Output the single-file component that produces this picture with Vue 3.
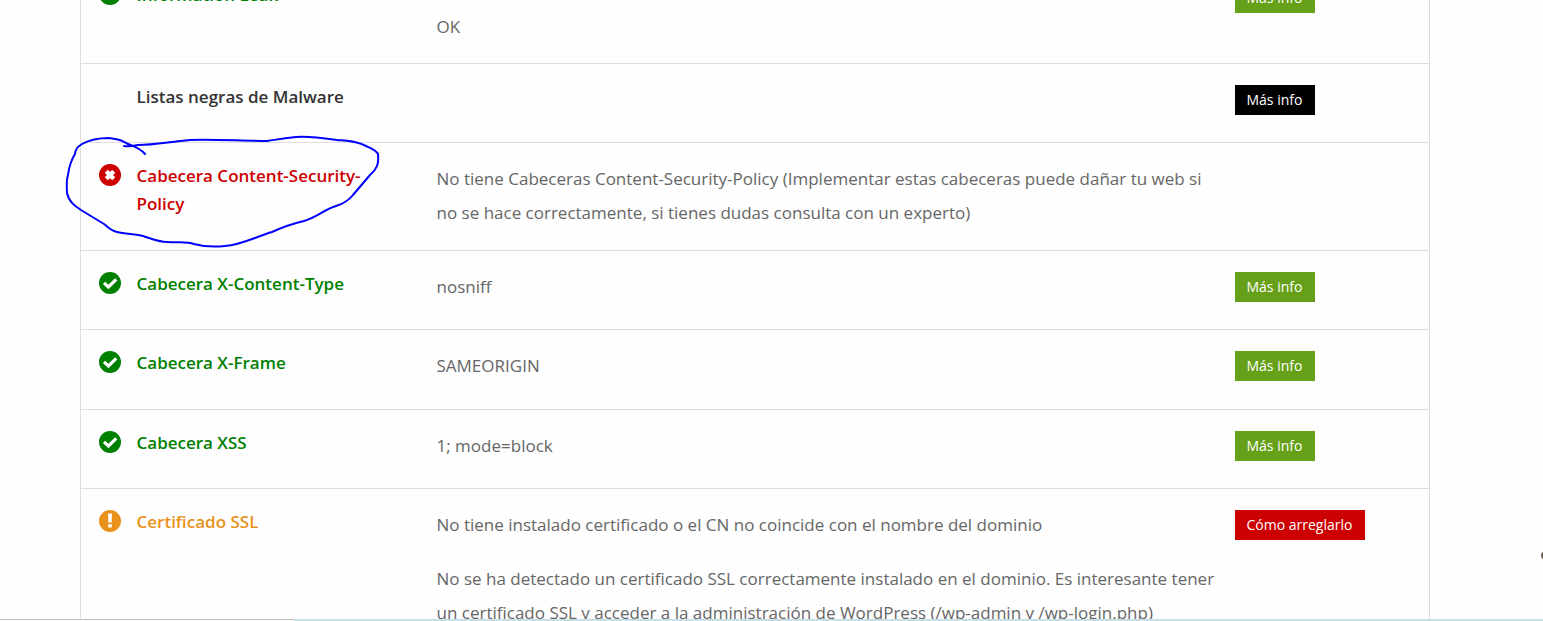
<script setup>
const rows = [
  { id: 'leak', status: 'ok', title: 'Information Leak', text: [['OK']], action: 'Más info', tone: 'green', spaced: true },
  { id: 'malware', status: 'none', title: 'Listas negras de Malware', text: [], action: 'Más info', tone: 'black' },
  {
    id: 'csp', status: 'error', title: 'Cabecera Content-Security-Policy',
    text: [[
      'No tiene Cabeceras Content-Security-Policy (Implementar estas cabeceras puede dañar tu web si',
      'no se hace correctamente, si tienes dudas consulta con un experto)',
    ]],
  },
  { id: 'type', status: 'ok', title: 'Cabecera X-Content-Type', text: [['nosniff']], action: 'Más info', tone: 'green' },
  { id: 'frame', status: 'ok', title: 'Cabecera X-Frame', text: [['SAMEORIGIN']], action: 'Más info', tone: 'green' },
  { id: 'xss', status: 'ok', title: 'Cabecera XSS', text: [['1; mode=block']], action: 'Más info', tone: 'green' },
  {
    id: 'ssl', status: 'warn', title: 'Certificado SSL',
    text: [
      ['No tiene instalado certificado o el CN no coincide con el nombre del dominio'],
      [
        'No se ha detectado un certificado SSL correctamente instalado en el dominio. Es interesante tener',
        'un certificado SSL y acceder a la administración de WordPress (/wp-admin y /wp-login.php)',
      ],
    ],
    action: 'Cómo arreglarlo', tone: 'red',
  },
]
</script>

<template>
  <div class="page">
    <main class="content">
      <table class="report">
        <colgroup>
          <col class="col-icon" />
          <col class="col-title" />
          <col class="col-text" />
          <col class="col-action" />
        </colgroup>
        <tbody>
          <tr v-for="row in rows" :key="row.id" :class="[row.status, { spaced: row.spaced }]">
            <td class="icon">
              <svg v-if="row.status !== 'none'" viewBox="0 0 22 22" aria-hidden="true">
                <circle cx="11" cy="11" r="11" fill="currentColor" />
                <path v-if="row.status === 'ok'" class="mark" d="M5 10.8 9.4 15 17.2 7.4" />
                <path v-else-if="row.status === 'error'" class="mark thick" d="M7.3 7.3 14.7 14.7M14.7 7.3 7.3 14.7" />
                <path v-else fill="#fff" d="M9 3.6h4l-.4 9H9.4zM9.2 14.2h3.6v3.4H9.2z" />
              </svg>
            </td>
            <th scope="row">{{ row.title }}</th>
            <td class="text">
              <p v-for="(paragraph, i) in row.text" :key="i">
                <template v-for="(line, j) in paragraph" :key="j"><br v-if="j" />{{ line }}</template>
              </p>
            </td>
            <td class="action">
              <a v-if="row.action" href="#" :class="row.tone">{{ row.action }}</a>
            </td>
          </tr>
        </tbody>
      </table>
    </main>
    <div class="strip"></div>
    <svg class="scribble" viewBox="0 0 340 130" aria-hidden="true">
      <path d="M85 24C79 17 72 16 66 13C61 9 56 9 49 8C39 8 31 9 22 14C17 17 15 20 15 24C10 32 9 37 8 45C6 51 7 59 7 63C9 72 15 76 21 80L44 94C49 98 51 101 57 102C66 104 77 104 83 106C92 109 99 112 107 112C118 113 126 111 134 114C145 117 155 117 165 116C181 115 198 106 212 102C223 97 231 94 244 91C258 87 265 79 276 76C283 74 289 70 293 65L310 45C317 39 319 34 318 24C316 20 310 18 306 16C296 11 288 11 277 10C263 8 250 6 236 7C224 8 215 10 207 11C183 11 151 9 130 10C108 12 94 15 78 15C73 16 69 17 64 16" />
    </svg>
    <div class="edge-dot"></div>
  </div>
</template>

<style>
body {
  margin: 0;
  background: #fefefe;
}
</style>

<style scoped>
.page {
  position: relative;
  display: flex;
  flex-direction: column;
  height: 100vh;
  overflow: hidden;
  font-family: "Open Sans", "Noto Sans", sans-serif;
  font-size: 17px;
}
.content {
  flex: 1;
  min-height: 0;
  overflow: hidden;
  padding: 0 113px 0 80px;
}
.report {
  width: 100%;
  margin-top: -39px;
  table-layout: fixed;
  border-collapse: collapse;
  border: 1px solid #ddd;
}
.col-icon { width: 56px; }
.col-title { width: 300px; }
.col-action { width: 195px; }
tr {
  height: 79px;
  border-bottom: 1px solid #ddd;
}
tr:nth-child(5) { height: 80px; }
td,
th {
  padding: 0;
  vertical-align: top;
}
.icon { padding: 21px 0 0 18px; }
.icon svg {
  display: block;
  width: 22px;
  height: 22px;
}
.mark {
  fill: none;
  stroke: #fff;
  stroke-width: 3.2;
}
.mark.thick {
  stroke-width: 4.4;
}
th {
  padding: 19px 60px 0 0;
  line-height: 28px;
  font-weight: 600;
  text-align: left;
}
.text {
  padding: 19px 0;
  color: #666;
  font-weight: 500;
  line-height: 34px;
  white-space: nowrap;
}
.error .text { padding-bottom: 20px; }
.spaced .text { padding-top: 48px; }
p { margin: 0; }
p + p { margin-top: 20px; }
.action { padding-top: 21px; }
.action a {
  display: inline-block;
  padding: 0 13px 0 12px;
  color: #fff;
  font-size: 14px;
  line-height: 30px;
  text-decoration: none;
  vertical-align: top;
}
.green { background: #669f18; }
.black { background: #000; }
.red { background: #c00; }
.ok .icon, .ok th { color: #008000; }
.error .icon, .error th { color: #c00; }
.warn .icon, .warn th { color: #e9921b; }
.none th { color: #333; }
.strip {
  height: 2px;
  background:
    linear-gradient(#bbb, #bbb) 0 0 / 294px 1px no-repeat,
    linear-gradient(#c8dfe6, #c8dfe6) 294px 0 no-repeat;
}
.scribble {
  position: absolute;
  left: 60px;
  top: 130px;
  width: 340px;
  height: 130px;
  pointer-events: none;
}
.scribble path {
  fill: none;
  stroke: #00f;
  stroke-width: 2;
  stroke-linecap: round;
  stroke-linejoin: round;
}
.edge-dot {
  position: absolute;
  right: -4px;
  top: 552px;
  width: 6px;
  height: 7px;
  border-radius: 50%;
  background: #6b5a48;
}
</style>
